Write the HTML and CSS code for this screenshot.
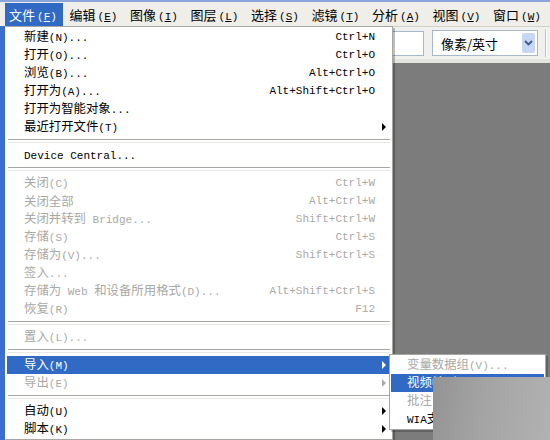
FILE: index.html
```html
<!DOCTYPE html>
<html lang="zh-CN">
<head>
    <meta charset="UTF-8">
    <title>文件菜单</title>
    <link rel="stylesheet" href="styles.css">
</head>
<body>
    <div class="app">
        <div class="menubar">
            <div class="mb-item active">文件<span class="en">(<u>F</u>)</span></div>
            <div class="mb-item">编辑<span class="en">(<u>E</u>)</span></div>
            <div class="mb-item">图像<span class="en">(<u>I</u>)</span></div>
            <div class="mb-item">图层<span class="en">(<u>L</u>)</span></div>
            <div class="mb-item">选择<span class="en">(<u>S</u>)</span></div>
            <div class="mb-item">滤镜<span class="en">(<u>T</u>)</span></div>
            <div class="mb-item">分析<span class="en">(<u>A</u>)</span></div>
            <div class="mb-item">视图<span class="en">(<u>V</u>)</span></div>
            <div class="mb-item">窗口<span class="en">(<u>W</u>)</span></div>
        </div>

        <div class="main">
            <div class="frame"></div>
            <div class="work">
                <div class="toolbar">
                    <div class="field"></div>
                    <div class="select">
                        <span class="select-text">像素/英寸</span>
                        <span class="drop">
                            <svg width="9" height="6" viewBox="0 0 9 6"><path d="M1 1 L4.5 4.5 L8 1" fill="none" stroke="#3d5a8c" stroke-width="1.8"/></svg>
                        </span>
                    </div>
                    <div class="divider"></div>
                </div>
                <div class="canvas"></div>
            </div>
        </div>

        <!-- file menu -->
        <div class="menu">
            <div class="item"><span class="label">新建<span class="en">(N)...</span></span><span class="key">Ctrl+N</span></div>
            <div class="item"><span class="label">打开<span class="en">(O)...</span></span><span class="key">Ctrl+O</span></div>
            <div class="item"><span class="label">浏览<span class="en">(B)...</span></span><span class="key">Alt+Ctrl+O</span></div>
            <div class="item"><span class="label">打开为<span class="en">(A)...</span></span><span class="key">Alt+Shift+Ctrl+O</span></div>
            <div class="item"><span class="label">打开为智能对象<span class="en">...</span></span></div>
            <div class="item"><span class="label">最近打开文件<span class="en">(T)</span></span><span class="arrow"></span></div>
            <div class="sep"></div>
            <div class="item"><span class="label"><span class="en">Device Central...</span></span></div>
            <div class="sep"></div>
            <div class="item off"><span class="label">关闭<span class="en">(C)</span></span><span class="key">Ctrl+W</span></div>
            <div class="item off"><span class="label">关闭全部</span><span class="key">Alt+Ctrl+W</span></div>
            <div class="item off"><span class="label">关闭并转到<span class="en"> Bridge...</span></span><span class="key">Shift+Ctrl+W</span></div>
            <div class="item off"><span class="label">存储<span class="en">(S)</span></span><span class="key">Ctrl+S</span></div>
            <div class="item off"><span class="label">存储为<span class="en">(V)...</span></span><span class="key">Shift+Ctrl+S</span></div>
            <div class="item off"><span class="label">签入<span class="en">...</span></span></div>
            <div class="item off"><span class="label">存储为<span class="en"> Web </span>和设备所用格式<span class="en">(D)...</span></span><span class="key">Alt+Shift+Ctrl+S</span></div>
            <div class="item off"><span class="label">恢复<span class="en">(R)</span></span><span class="key">F12</span></div>
            <div class="sep"></div>
            <div class="item off"><span class="label">置入<span class="en">(L)...</span></span></div>
            <div class="sep"></div>
            <div class="item on"><span class="label">导入<span class="en">(M)</span></span><span class="arrow"></span></div>
            <div class="item off"><span class="label">导出<span class="en">(E)</span></span><span class="arrow"></span></div>
            <div class="sep"></div>
            <div class="item"><span class="label">自动<span class="en">(U)</span></span><span class="arrow"></span></div>
            <div class="item"><span class="label">脚本<span class="en">(K)</span></span><span class="arrow"></span></div>
        </div>

        <!-- import submenu -->
        <div class="submenu">
            <div class="item off"><span class="label">变量数据组<span class="en">(V)...</span></span></div>
            <div class="item on"><span class="label">视频帧到图层<span class="en">(F)...</span></span></div>
            <div class="item off"><span class="label">批注<span class="en">...</span></span></div>
            <div class="item"><span class="label"><span class="en">WIA</span>支持<span class="en">...</span></span></div>
        </div>

        <div class="shade"></div>
    </div>
</body>
</html>
```
FILE: styles.css
```css
*{
    margin: 0;
    padding: 0;
    box-sizing: border-box;
}
body{
    background-color: #7c7c7c;
    font-family: "Noto Sans CJK SC", sans-serif;
    font-size: 13px;
    color: #000;
}
.app{
    position: relative;
    width: 550px;
    height: 440px;
    overflow: hidden;
    display: flex;
    flex-direction: column;
}
.en{
    font-family: "Liberation Mono", monospace;
    font-size: 11px;
}

/* menu bar */
.menubar{
    height: 26px;
    display: flex;
    align-items: flex-end;
    padding-left: 5px;
    background-color: #efeee9;
    border-top: 2px solid #8aa6dc;
}
.mb-item{
    width: 58px;
    height: 23px;
    line-height: 23px;
    margin-right: 2.5px;
    padding-left: 4px;
    white-space: nowrap;
}
.mb-item .en{
    margin-left: 2px;
}
.mb-item.active{
    background-color: #316ac5;
    color: #fff;
}

/* workspace */
.main{
    flex: 1;
    display: flex;
}
.frame{
    width: 5px;
    background-color: #3a6fd0;
}
.work{
    flex: 1;
    display: flex;
    flex-direction: column;
}
.toolbar{
    height: 37px;
    display: flex;
    align-items: center;
    justify-content: flex-end;
    padding-right: 3px;
    background-color: #f0f0ee;
    border-top: 1px solid #d0d0cc;
    border-bottom: 4px solid #e4e4e0;
}
.field{
    width: 90px;
    height: 25px;
    background-color: #fff;
    border: 1px solid #a8b8cc;
}
.select{
    width: 106px;
    height: 26px;
    margin-left: 8px;
    display: flex;
    align-items: center;
    padding: 0 2px 0 8px;
    background-color: #fff;
    border: 1px solid #a8b8cc;
}
.select-text{
    flex: 1;
    white-space: nowrap;
}
.drop{
    width: 13px;
    height: 20px;
    display: flex;
    align-items: center;
    justify-content: center;
    background-color: #c6d6f4;
    border-radius: 2px;
}
.divider{
    width: 2px;
    height: 28px;
    margin-left: 7px;
    border-left: 1px solid #c0c0bc;
    border-right: 1px solid #fff;
}
.canvas{
    flex: 1;
    background-color: #7c7c7c;
}

/* dropdown menus */
.menu{
    position: absolute;
    left: 5px;
    top: 26px;
    width: 388px;
    padding: 1px;
    background-color: #fff;
    border: 1px solid #a7a6a0;
    border-left-color: #fff;
    box-shadow: 2px 2px 0 rgba(0, 0, 0, 0.25);
}
.item{
    height: 18px;
    display: flex;
    align-items: center;
    padding: 0 16px 0 17px;
    white-space: nowrap;
}
.label{
    font-size: 12.4px;
    line-height: 18px;
    white-space: pre;
}
.item.off{
    color: #a9a9a6;
}
.item.on{
    background-color: #316ac5;
    color: #fff;
}
.key{
    margin-left: auto;
    font-family: "Liberation Mono", monospace;
    font-size: 11px;
}
.arrow{
    margin-left: auto;
    margin-right: -11px;
    width: 0;
    height: 0;
    border-left: 4px solid #000;
    border-top: 4px solid transparent;
    border-bottom: 4px solid transparent;
}
.item.on .arrow{
    border-left-color: #fff;
}
.item.off .arrow{
    border-left-color: #a9a9a6;
}
.sep{
    height: 10px;
    margin: 0 1px;
    display: flex;
    flex-direction: column;
    justify-content: center;
}
.sep::before{
    content: "";
    height: 2px;
    border-top: 1px solid #a7a6a0;
    border-bottom: 1px solid #e8e8e6;
}

.submenu{
    position: absolute;
    left: 389px;
    top: 354px;
    width: 157px;
    padding: 1px;
    background-color: #fff;
    border: 1px solid #a7a6a0;
    box-shadow: 2px 2px 0 rgba(0, 0, 0, 0.2);
}
.submenu .item{
    padding-left: 16px;
    padding-right: 4px;
}

.shade{
    position: absolute;
    left: 433px;
    top: 377px;
    width: 117px;
    height: 63px;
    background: linear-gradient(100deg, #939393 0%, #a3a3a3 40%, #b2b2b2 100%);
}
```
